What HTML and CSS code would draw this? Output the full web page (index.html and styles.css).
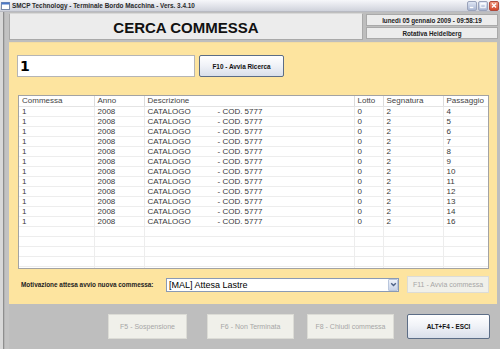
FILE: index.html
```html
<!DOCTYPE html>
<html>
<head>
<meta charset="utf-8">
<link rel="stylesheet" href="styles.css">
</head>
<body>
<div class="window">
  <div class="titlebar">
    <svg class="appicon" width="9" height="8" viewBox="0 0 9 8"><rect x="0.5" y="0.5" width="8" height="7" fill="#fff" stroke="#7a8aa8"/><rect x="0.5" y="0.5" width="8" height="2" fill="#4a78c8"/></svg>
    <span class="title">SMCP Technology - Terminale Bordo Macchina - Vers. 3.4.10</span>
    <div class="ctrls">
      <span class="ctrl"><svg width="9" height="9" viewBox="0 0 9 9"><rect x="2" y="6" width="4" height="1.5" fill="#fff"/></svg></span>
      <span class="ctrl"><svg width="9" height="9" viewBox="0 0 9 9"><rect x="2" y="2" width="5" height="5" fill="none" stroke="#fff" stroke-width="1"/><rect x="2" y="2" width="5" height="1.5" fill="#fff"/></svg></span>
      <span class="ctrl close"><svg width="9" height="9" viewBox="0 0 9 9"><path d="M2.2 2.2 L6.8 6.8 M6.8 2.2 L2.2 6.8" stroke="#fff" stroke-width="1.5"/></svg></span>
    </div>
  </div>
  <div class="frame">
    <div class="edge"></div>
    <div class="main">
      <div class="header">
        <div class="titlebox">CERCA COMMESSA</div>
        <div class="info">
          <div class="infobox">lunedì 05 gennaio 2009 - 09:58:19</div>
          <div class="infobox">Rotativa Heidelberg</div>
        </div>
      </div>
      <div class="panel">
        <div class="search">
          <div class="input">1</div>
          <div class="btn primary f10">F10 - Avvia Ricerca</div>
        </div>
        <div class="grid">
          <table>
            <colgroup><col class="c1"><col class="c2"><col class="c3"><col class="c4"><col class="c5"><col class="c6"><col></colgroup>
            <thead>
              <tr><th>Commessa</th><th>Anno</th><th>Descrizione</th><th>Lotto</th><th>Segnatura</th><th>Passaggio</th><th></th></tr>
            </thead>
            <tbody>
              <tr><td>1</td><td>2008</td><td><span class="cat">CATALOGO</span>- COD. 5777</td><td>0</td><td>2</td><td>4</td><td></td></tr>
              <tr><td>1</td><td>2008</td><td><span class="cat">CATALOGO</span>- COD. 5777</td><td>0</td><td>2</td><td>5</td><td></td></tr>
              <tr><td>1</td><td>2008</td><td><span class="cat">CATALOGO</span>- COD. 5777</td><td>0</td><td>2</td><td>6</td><td></td></tr>
              <tr><td>1</td><td>2008</td><td><span class="cat">CATALOGO</span>- COD. 5777</td><td>0</td><td>2</td><td>7</td><td></td></tr>
              <tr><td>1</td><td>2008</td><td><span class="cat">CATALOGO</span>- COD. 5777</td><td>0</td><td>2</td><td>8</td><td></td></tr>
              <tr><td>1</td><td>2008</td><td><span class="cat">CATALOGO</span>- COD. 5777</td><td>0</td><td>2</td><td>9</td><td></td></tr>
              <tr><td>1</td><td>2008</td><td><span class="cat">CATALOGO</span>- COD. 5777</td><td>0</td><td>2</td><td>10</td><td></td></tr>
              <tr><td>1</td><td>2008</td><td><span class="cat">CATALOGO</span>- COD. 5777</td><td>0</td><td>2</td><td>11</td><td></td></tr>
              <tr><td>1</td><td>2008</td><td><span class="cat">CATALOGO</span>- COD. 5777</td><td>0</td><td>2</td><td>12</td><td></td></tr>
              <tr><td>1</td><td>2008</td><td><span class="cat">CATALOGO</span>- COD. 5777</td><td>0</td><td>2</td><td>13</td><td></td></tr>
              <tr><td>1</td><td>2008</td><td><span class="cat">CATALOGO</span>- COD. 5777</td><td>0</td><td>2</td><td>14</td><td></td></tr>
              <tr><td>1</td><td>2008</td><td><span class="cat">CATALOGO</span>- COD. 5777</td><td>0</td><td>2</td><td>16</td><td></td></tr>
              <tr><td></td><td></td><td></td><td></td><td></td><td></td><td></td></tr>
              <tr><td></td><td></td><td></td><td></td><td></td><td></td><td></td></tr>
              <tr><td></td><td></td><td></td><td></td><td></td><td></td><td></td></tr>
              <tr><td></td><td></td><td></td><td></td><td></td><td></td><td></td></tr>
              <tr><td></td><td></td><td></td><td></td><td></td><td></td><td></td></tr>
            </tbody>
          </table>
        </div>
        <div class="motiv">
          <span class="lbl">Motivazione attesa avvio nuova commessa:</span>
          <div class="select">
            <span class="seltext">[MAL] Attesa Lastre</span>
            <span class="arrow"><svg width="7" height="7" viewBox="0 0 7 7"><path d="M1.2 2.3 L3.5 4.6 L5.8 2.3" fill="none" stroke="#4d6185" stroke-width="1.4"/></svg></span>
          </div>
          <div class="btn disabled f11">F11 - Avvia commessa</div>
        </div>
      </div>
      <div class="bottom">
        <div class="btn disabled bf5">F5 - Sospensione</div>
        <div class="btn disabled bf6">F6 - Non Terminata</div>
        <div class="btn disabled bf8">F8 - Chiudi commessa</div>
        <div class="btn primary besc">ALT+F4 - ESCI</div>
      </div>
    </div>
  </div>
</div>
</body>
</html>
```
FILE: styles.css
```css
html, body {
  margin: 0;
  padding: 0;
}
body {
  width: 500px;
  height: 349px;
  overflow: hidden;
  background: #bebebe;
  font-family: "Liberation Sans", Arial, sans-serif;
}
.window {
  width: 500px;
  height: 349px;
  display: flex;
  flex-direction: column;
}
.titlebar {
  height: 12px;
  flex: none;
  display: flex;
  align-items: center;
  background: linear-gradient(#f6f7fa, #dfe1e8 60%, #cfd2db);
  border-bottom: 1px solid #b8bac2;
  box-sizing: border-box;
}
.appicon {
  margin-left: 1px;
  flex: none;
}
.title {
  margin-left: 2px;
  font-size: 6.4px;
  font-weight: bold;
  color: #2a2a2a;
  white-space: nowrap;
}
.ctrls {
  margin-left: auto;
  display: flex;
  gap: 1px;
  margin-right: 1px;
}
.ctrl {
  width: 10px;
  height: 10px;
  box-sizing: border-box;
  border: 1px solid #9aa3bb;
  border-radius: 2px;
  background: linear-gradient(#dfe6f4, #a9b6d2);
  display: flex;
  align-items: center;
  justify-content: center;
}
.ctrl svg { display: block; }
.ctrl.close {
  border-color: #b04a3a;
  background: linear-gradient(#f09a80, #d2462a);
}
.frame {
  flex: 1;
  display: flex;
  min-height: 0;
}
.edge {
  width: 9px;
  flex: none;
  background: linear-gradient(to right, #d8d8d8 0, #d8d8d8 3px, #8e8e8e 3px, #8e8e8e 4px, #b4b4b4 4px, #b4b4b4 5px, #c2c2c2 5px);
}
.main {
  flex: 1;
  display: flex;
  flex-direction: column;
  padding-right: 2px;
}
.header {
  display: flex;
  height: 27px;
  margin-top: 1px;
}
.titlebox {
  width: 354px;
  box-sizing: border-box;
  border: 1px solid #a9a9a9;
  border-top-color: #d8d8d8;
  background: #ececec;
  display: flex;
  align-items: center;
  justify-content: center;
  font-size: 15px;
  font-weight: bold;
  color: #111;
  padding-top: 1px;
}
.info {
  flex: 1;
  margin-left: 3px;
  display: flex;
  flex-direction: column;
  gap: 1px;
  padding-top: 1px;
}
.infobox {
  height: 12px;
  box-sizing: border-box;
  border: 1px solid #a9a9a9;
  background: #ececec;
  font-size: 6.3px;
  font-weight: bold;
  color: #222;
  display: flex;
  align-items: center;
  justify-content: center;
}
.panel {
  margin-top: 2px;
  margin-right: 1px;
  height: 262px;
  background: #fde49f;
  box-sizing: border-box;
  border-top: 1px solid #f4dca0;
  display: flex;
  flex-direction: column;
}
.search {
  display: flex;
  margin-top: 12px;
  margin-left: 8px;
}
.input {
  width: 178px;
  height: 22px;
  box-sizing: border-box;
  background: #fff;
  border: 1px solid #b5b5b5;
  font-family: "DejaVu Sans", Verdana, sans-serif;
  font-weight: bold;
  font-size: 14px;
  line-height: 20px;
  padding-left: 2px;
  color: #000;
}
.btn {
  box-sizing: border-box;
  display: flex;
  align-items: center;
  justify-content: center;
  white-space: nowrap;
  flex: none;
}
.btn.primary {
  border: 1px solid #5c6d86;
  border-radius: 2px;
  background: linear-gradient(#ffffff, #f1f3f8 45%, #d9dfea);
  font-weight: bold;
  font-size: 6.4px;
  color: #111;
}
.btn.disabled {
  border: 1px solid #dcdcd6;
  background: #f0f0ea;
  color: #a6a6a6;
  font-size: 7px;
}
.f10 {
  width: 85px;
  height: 22px;
  margin-left: 4px;
}
.grid {
  margin-top: 18px;
  margin-left: 9px;
  width: 471px;
  height: 174px;
  box-sizing: border-box;
  border: 1px solid #a3a3a3;
  background: #fff;
  overflow: hidden;
}
table {
  border-collapse: collapse;
  table-layout: fixed;
  width: 469px;
  font-size: 8px;
  color: #3a3a3a;
}
col.c1 { width: 75px; }
col.c2 { width: 50px; }
col.c3 { width: 210px; }
col.c4 { width: 29px; }
col.c5 { width: 60px; }
col.c6 { width: 45px; }
th {
  height: 10px;
  padding: 0 0 0 3px;
  font-weight: normal;
  text-align: left;
  line-height: 10px;
  white-space: nowrap;
  overflow: hidden;
  border-right: 1px solid #dcdcdc;
  border-bottom: 1px solid #e4e4e4;
  color: #444;
}
th:last-child { border-right: none; }
td {
  height: 9px;
  padding: 0 0 0 3px;
  line-height: 9px;
  white-space: nowrap;
  overflow: hidden;
  border-right: 1px solid #ededed;
  border-bottom: 1px solid #ededed;
}
td:last-child { border-right: none; }
.cat {
  display: inline-block;
  width: 70px;
}
.motiv {
  display: flex;
  align-items: center;
  margin-top: 7px;
  height: 17px;
}
.lbl {
  width: 145px;
  margin-left: 12px;
  font-size: 6.4px;
  font-weight: bold;
  color: #222;
  white-space: nowrap;
  flex: none;
}
.select {
  width: 233px;
  height: 14px;
  box-sizing: border-box;
  border: 1px solid #8a9ab5;
  background: #fff;
  display: flex;
  align-items: center;
  flex: none;
}
.seltext {
  flex: 1;
  font-size: 9px;
  padding-left: 2px;
  color: #000;
  white-space: nowrap;
}
.arrow {
  width: 10px;
  height: 12px;
  box-sizing: border-box;
  border: 1px solid #b9c6dd;
  border-radius: 1px;
  background: linear-gradient(#eef2fa, #c8d3e8);
  display: flex;
  align-items: center;
  justify-content: center;
}
.arrow svg { display: block; }
.f11 {
  width: 82px;
  height: 17px;
  margin-left: 8px;
}
.bottom {
  display: flex;
  margin-top: 10px;
  height: 25px;
}
.bottom .btn { height: 25px; }
.bf5 { width: 79px; margin-left: 99px; }
.bf6 { width: 87px; margin-left: 20px; }
.bf8 { width: 87px; margin-left: 13px; }
.besc { width: 83px; margin-left: 13px; }
```
